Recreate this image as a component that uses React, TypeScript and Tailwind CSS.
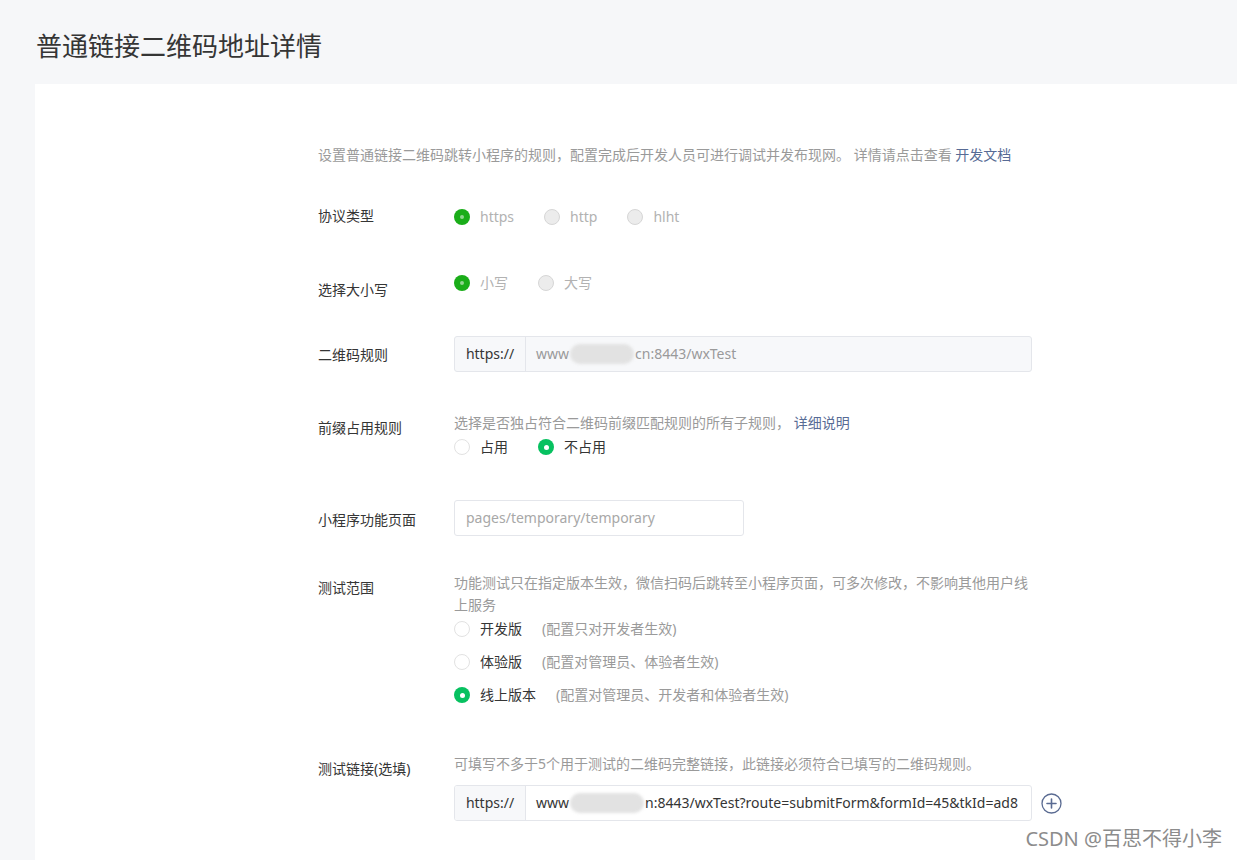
import React from "react";

type RadioKind = "disabledOn" | "disabledOff" | "on" | "off";

function RadioDot({ kind }: { kind: RadioKind }) {
  if (kind === "disabledOn") {
    return (
      <span className="flex h-4 w-4 shrink-0 items-center justify-center rounded-full bg-[#1aad19]">
        <span className="h-[4px] w-[4px] rounded-full bg-[#8fd48f]" />
      </span>
    );
  }
  if (kind === "disabledOff") {
    return <span className="h-4 w-4 shrink-0 rounded-full border border-[#d6d6d6] bg-[#ececec]" />;
  }
  if (kind === "on") {
    return (
      <span className="flex h-4 w-4 shrink-0 items-center justify-center rounded-full bg-[#07c160]">
        <span className="h-[5px] w-[5px] rounded-full bg-white" />
      </span>
    );
  }
  return <span className="h-4 w-4 shrink-0 rounded-full border border-[#e2e2e2] bg-white" />;
}

function Radio({
  kind,
  label,
  note,
}: {
  kind: RadioKind;
  label: string;
  note?: string;
}) {
  const disabled = kind === "disabledOn" || kind === "disabledOff";
  return (
    <label className="flex h-5 items-center">
      <RadioDot kind={kind} />
      <span className={`ml-[10px] ${disabled ? "text-[#b2b2b2]" : "text-[#353535]"}`}>{label}</span>
      {note ? <span className="ml-5 text-[#9a9a9a]">{note}</span> : null}
    </label>
  );
}

function Blur({ width }: { width: number }) {
  return (
    <span
      className="mx-[1px] inline-block h-[20px] shrink-0 rounded-full bg-[#e2e2e2] blur-[1.5px]"
      style={{ width }}
    />
  );
}

function PlusCircle() {
  return (
    <svg width="21" height="21" viewBox="0 0 21 21" aria-hidden="true" className="shrink-0">
      <circle cx="10.5" cy="10.5" r="9.5" fill="none" stroke="#5a6b92" strokeWidth="1.3" />
      <path d="M10.5 6v9M6 10.5h9" stroke="#5a6b92" strokeWidth="1.6" strokeLinecap="round" />
    </svg>
  );
}

export default function App() {
  return (
    <div
      className="relative h-[860px] w-full overflow-hidden bg-[#f6f7f9] text-sm text-[#353535]"
      style={{ fontFamily: '"Noto Sans", "Noto Sans CJK SC", sans-serif' }}
    >
      <h1 className="pl-[36px] pt-[28px] text-[26px] leading-[36px] font-normal text-[#353535]">
        普通链接二维码地址详情
      </h1>

      <div className="ml-[35px] mt-[20px] min-h-[800px] bg-white pl-[283px] pt-[61px]">
        <p className="leading-5 text-[#9a9a9a]">
          设置普通链接二维码跳转小程序的规则，配置完成后开发人员可进行调试并发布现网。 详情请点击查看{" "}
          <a className="text-[#576b95]">开发文档</a>
        </p>

        {/* 协议类型 */}
        <div className="mt-[41px] flex items-start">
          <div className="w-[136px] shrink-0 leading-5">协议类型</div>
          <div className="flex gap-[30px] pt-[1px]">
            <Radio kind="disabledOn" label="https" />
            <Radio kind="disabledOff" label="http" />
            <Radio kind="disabledOff" label="hlht" />
          </div>
        </div>

        {/* 选择大小写 */}
        <div className="mt-[46px] flex items-start">
          <div className="w-[136px] shrink-0 pt-[7px] leading-5">选择大小写</div>
          <div className="flex gap-[30px]">
            <Radio kind="disabledOn" label="小写" />
            <Radio kind="disabledOff" label="大写" />
          </div>
        </div>

        {/* 二维码规则 */}
        <div className="mt-[36px] flex items-start">
          <div className="w-[136px] shrink-0 pt-[9px] leading-5">二维码规则</div>
          <div className="flex h-9 w-[578px] overflow-hidden rounded-[3px] border border-[#e4e6eb] bg-[#f7f8fa]">
            <div className="flex w-[71px] shrink-0 items-center justify-center border-r border-[#e4e6eb] text-[#353535]">
              https://
            </div>
            <div className="flex items-center whitespace-nowrap pl-[10px] text-[#9a9a9a]">
              <span className="shrink-0">www</span>
              <Blur width={64} />
              <span className="shrink-0">cn:8443/wxTest</span>
            </div>
          </div>
        </div>

        {/* 前缀占用规则 */}
        <div className="mt-[41px] flex items-start">
          <div className="w-[136px] shrink-0 pt-[5px] leading-5">前缀占用规则</div>
          <div>
            <p className="leading-5 text-[#9a9a9a]">
              选择是否独占符合二维码前缀匹配规则的所有子规则， <a className="text-[#576b95]">详细说明</a>
            </p>
            <div className="mt-[4px] flex gap-[30px]">
              <Radio kind="off" label="占用" />
              <Radio kind="on" label="不占用" />
            </div>
          </div>
        </div>

        {/* 小程序功能页面 */}
        <div className="mt-[43px] flex items-start">
          <div className="w-[136px] shrink-0 pt-[10px] leading-5">小程序功能页面</div>
          <div className="flex h-9 w-[290px] items-center rounded-[3px] border border-[#e4e6eb] bg-white pl-[11px] text-[#a8a8a8]">
            pages/temporary/temporary
          </div>
        </div>

        {/* 测试范围 */}
        <div className="mt-[36px] flex items-start">
          <div className="w-[136px] shrink-0 pt-[6px] leading-5">测试范围</div>
          <div className="w-[578px]">
            <p className="leading-[22px] text-[#9a9a9a]">
              功能测试只在指定版本生效，微信扫码后跳转至小程序页面，可多次修改，不影响其他用户线上服务
            </p>
            <div className="mt-[3px] flex flex-col gap-[13px]">
              <Radio kind="off" label="开发版" note="(配置只对开发者生效)" />
              <Radio kind="off" label="体验版" note="(配置对管理员、体验者生效)" />
              <Radio kind="on" label="线上版本" note="(配置对管理员、开发者和体验者生效)" />
            </div>
          </div>
        </div>

        {/* 测试链接 */}
        <div className="mt-[49px] flex items-start">
          <div className="w-[136px] shrink-0 pt-[5px] leading-5">测试链接(选填)</div>
          <div>
            <p className="leading-5 text-[#9a9a9a]">
              可填写不多于5个用于测试的二维码完整链接，此链接必须符合已填写的二维码规则。
            </p>
            <div className="mt-[11px] flex items-center gap-[9px]">
              <div className="flex h-9 w-[578px] overflow-hidden rounded-[3px] border border-[#e4e6eb] bg-white">
                <div className="flex w-[71px] shrink-0 items-center justify-center border-r border-[#e4e6eb] bg-[#f7f8fa] text-[#353535]">
                  https://
                </div>
                <div className="flex min-w-0 flex-1 items-center overflow-hidden whitespace-nowrap pl-[10px] text-[#353535]">
                  <span className="shrink-0">www</span>
                  <Blur width={74} />
                  <span className="shrink-0">n:8443/wxTest?route=submitForm&amp;formId=45&amp;tkId=ad8</span>
                </div>
              </div>
              <PlusCircle />
            </div>
          </div>
        </div>
      </div>

      <div className="absolute bottom-[8px] right-[15px] text-[20px] leading-[26px] text-[#8c8c8c]">
        CSDN @百思不得小李
      </div>
    </div>
  );
}
